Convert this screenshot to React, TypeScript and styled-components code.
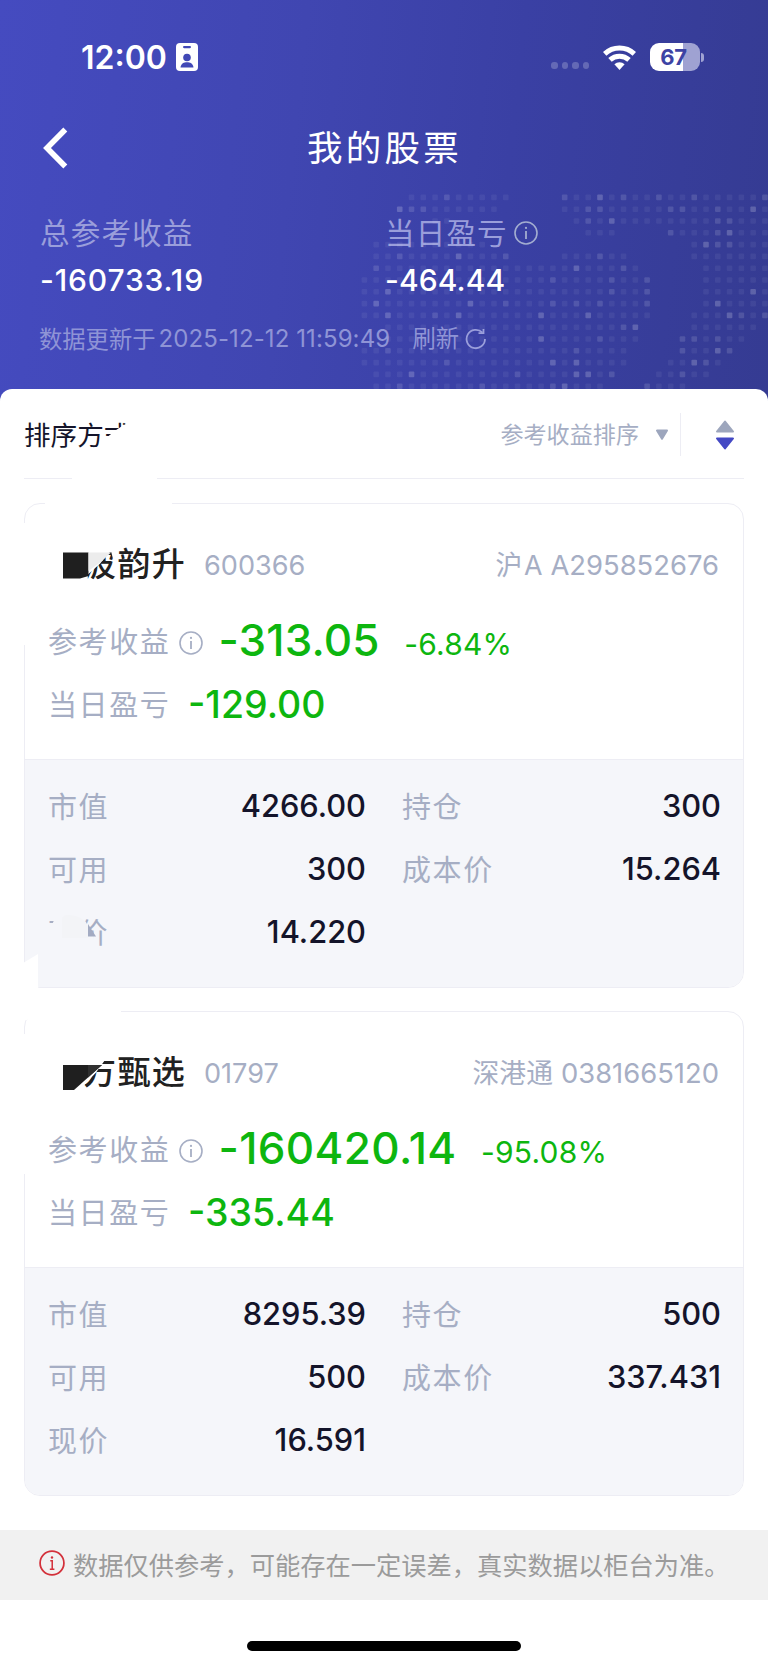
import React from 'react';
import styled, { createGlobalStyle } from 'styled-components';

const GlobalStyle = createGlobalStyle`
  * { box-sizing: border-box; }
  body {
    margin: 0;
    background: #fff;
    font-family: Inter, "Noto Sans CJK SC", sans-serif;
    line-height: 1;
    white-space: nowrap;
  }
  svg { display: block; flex: none; }
`;

const muted = '#a6aec4';
const line = '#ededf4';
const ink = '#14142a';
const green = '#0db60f';

const Page = styled.main`
  width: 768px;
  height: 1667px;
  display: flex;
  flex-direction: column;
  overflow: hidden;
  background: #fff;
`;

const Header = styled.header`
  position: relative;
  height: 403px;
  background: linear-gradient(96deg, #454bc0 0%, #4046b1 38%, #3a40a4 65%, #353b92 100%);
`;

const DotMap = styled.svg`
  position: absolute;
  left: 358px;
  top: 191px;
`;

const StatusBar = styled.div`
  height: 114px;
  padding: 0 64px 0 81px;
  display: flex;
  align-items: center;
`;

const Clock = styled.span`
  width: 95px;
  padding-top: 1px;
  font-size: 32px;
  font-weight: 600;
  letter-spacing: 0;
  color: #fff;
`;

const StatusRight = styled.div`
  margin-left: auto;
  display: flex;
  align-items: center;
`;

const Signal = styled.div`
  display: flex;
  gap: 4px;
  margin: 17px 14px 0 0;
`;

const SignalDot = styled.i`
  width: 6.5px;
  height: 6.5px;
  border-radius: 3px;
  background: rgba(255, 255, 255, 0.22);
`;

const Battery = styled.div`
  width: 50px;
  height: 28px;
  padding-right: 3px;
  margin-left: 14px;
  border-radius: 9px;
  display: flex;
  align-items: center;
  justify-content: center;
  background: linear-gradient(90deg, #fff 67%, #9fa2d2 67%);
  color: #3d43a4;
  font-size: 22px;
  font-weight: 700;
  letter-spacing: -0.3px;
`;

const BatteryCap = styled.i`
  width: 3px;
  height: 9px;
  margin-left: 1px;
  border-radius: 0 4px 4px 0;
  background: #9fa2d2;
`;

const NavBar = styled.nav`
  height: 68px;
  padding: 0 42px;
  display: grid;
  grid-template-columns: 60px 1fr 60px;
  align-items: center;
`;

const Title = styled.h1`
  margin: 0;
  padding: 2px 0 0 1px;
  text-align: center;
  font-size: 35.5px;
  font-weight: 400;
  letter-spacing: 3.2px;
  color: #fff;
`;

const Summary = styled.section`
  padding: 36px 40px 0;
  display: grid;
  grid-template-columns: 345px 1fr;
`;

const SummaryLabel = styled.div`
  height: 30px;
  display: flex;
  align-items: center;
  gap: 6px;
  font-size: 29.5px;
  letter-spacing: 1.2px;
  color: #9a9edb;
`;

const LabelText = styled.span`
  padding-top: 1px;
`;

const SummaryValue = styled.div<{ $spacing?: number }>`
  margin-top: 17px;
  font-size: 30px;
  font-weight: 500;
  letter-spacing: ${p => p.$spacing ?? 0}px;
  color: #fff;
`;

const Updated = styled.div`
  height: 24px;
  margin: 32px 0 0 39px;
  display: flex;
  align-items: center;
  font-size: 23.3px;
  color: #8f94d6;
`;

const UpdatedTime = styled.span`
  width: 248px;
  margin-left: 3px;
  font-size: 24px;
  letter-spacing: 0.1px;
`;

const Refresh = styled.span`
  margin-left: 6px;
  margin-right: 6px;
`;

const Sheet = styled.section`
  position: relative;
  margin-top: -14px;
  padding: 0 24px;
  height: 1141px;
  border-radius: 12px 12px 0 0;
  background: #fff;
`;

const SortBar = styled.div`
  position: relative;
  height: 90px;
  padding-top: 2px;
  display: flex;
  align-items: center;
  border-bottom: 1px solid ${line};
`;

const SortTitle = styled.span`
  padding-top: 1px;
  font-size: 26.6px;
  color: ${ink};
`;

const SortKey = styled.span`
  margin-left: auto;
  padding-top: 2px;
  font-size: 23.1px;
  color: ${muted};
`;

const Cut = styled.span<{ $shape: string }>`
  display: inline-block;
  clip-path: polygon(${p => p.$shape});
`;

const SortDivider = styled.i`
  width: 1px;
  height: 43px;
  margin: 0 34px 0 11px;
  background: ${line};
`;

const Cards = styled.div`
  padding-top: 24px;
  display: flex;
  flex-direction: column;
  gap: 23px;
`;

const Card = styled.article`
  position: relative;
  height: 485px;
  border: 1px solid ${line};
  border-radius: 16px;
  background: #fff;
`;

const Overlay = styled.svg`
  position: absolute;
  left: -1px;
  top: -1px;
  overflow: visible;
`;

const CardTop = styled.div`
  height: 256px;
  padding: 41px 24px 0 23px;
  border-bottom: 1px solid ${line};
`;

const NameRow = styled.div`
  height: 40px;
  padding-left: 35px;
  display: flex;
  align-items: center;
`;

const Name = styled.h2`
  margin: 0;
  width: 121px;
  padding-bottom: 1px;
  font-size: 33px;
  font-weight: 500;
  letter-spacing: 1.4px;
  color: #212121;
`;

const Code = styled.span`
  padding-top: 2px;
  font-size: 27.1px;
  color: ${muted};
`;

const Account = styled.span`
  margin-left: auto;
  padding-top: 2px;
  display: flex;
  align-items: baseline;
  gap: 8px;
  font-size: 27.4px;
  color: ${muted};
`;

const Market = styled.span`
  font-size: 26.8px;
  word-spacing: -6px;
`;

const GainRow = styled.div`
  height: 46px;
  margin-top: 32px;
  display: flex;
  align-items: center;
`;

const GainLabel = styled.span<{ $top: number }>`
  width: 124px;
  padding-top: ${p => p.$top}px;
  font-size: 29px;
  letter-spacing: 1.6px;
  color: ${muted};
`;

const IconSlot = styled.span`
  margin: 6px 0 0 7px;
  width: 39.5px;
`;

const Gain = styled.strong<{ $spacing: number }>`
  font-size: 44px;
  font-weight: 500;
  letter-spacing: ${p => p.$spacing}px;
  color: ${green};
`;

const Percent = styled.span`
  padding-top: 8px;
  margin-left: 24.5px;
  font-size: 30px;
  letter-spacing: 0.2px;
  color: ${green};
`;

const DayRow = styled.div`
  height: 40px;
  margin-top: 22px;
  display: flex;
  align-items: center;
  gap: 16px;
`;

const DayGain = styled.strong`
  font-size: 37.5px;
  font-weight: 500;
  color: ${green};
`;

const CardBody = styled.dl`
  margin: 0;
  height: 227px;
  padding: 15px 21px 0 23px;
  display: grid;
  grid-template-columns: 318px 319px;
  column-gap: 36px;
  grid-auto-rows: 63px;
  border-radius: 0 0 15px 15px;
  background: #f5f6fa;
`;

const Field = styled.div`
  display: flex;
  align-items: center;
  justify-content: space-between;
`;

const FieldLabel = styled.dt`
  padding-top: 1px;
  font-size: 29px;
  letter-spacing: 1.6px;
  color: ${muted};
`;

const FieldValue = styled.dd`
  margin: 0 0 1px;
  font-size: 30.8px;
  font-weight: 500;
  color: ${ink};
`;

const Notice = styled.footer`
  height: 70px;
  padding: 0 39px;
  display: flex;
  align-items: center;
  gap: 8px;
  background: #f1f1f1;
  font-size: 25.25px;
  color: #9b9b9b;
`;

const NoticeIcon = styled.span`
  margin-bottom: 5px;
`;

const NoticeText = styled.span`
  padding-top: 3px;
`;

const HomeIndicator = styled.div`
  width: 274px;
  height: 10px;
  margin: 41px auto 0;
  border-radius: 5px;
  background: #000;
`;

/* One string per row of the dotted map; digits are dot brightness. */
const dotRows = [
  '....111211111....211312112112111112',
  '...322111111.....112211111221121131',
  '......11..........12131111111122111',
  '...................111....211123111',
  '.1111111111.................1322111',
  '.112111131112....111211.....1111111',
  '.21111111111111111311121.....111111',
  '1111111111111111211112112....111111',
  '1131111111111111111112112....111131',
  '1311111113112111212121112....131111',
  '1131112131111113111311111...1113212',
  '..1111111111111111111123....111111.',
  '..1111111111111311112111...221211..',
  '11211111111111111121111....21132...',
  '11111112111111113131111...11321....',
  '.111311111111211113312...11211.....',
  '.11211111121111123111...2111.......',
];
const dotOpacity = [0, 0.06, 0.13, 0.2];

const WorldDots = () => (
  <DotMap width="410" height="198" aria-hidden>
    {dotRows.flatMap((row, r) =>
      [...row].map((c, i) =>
        c === '.' ? null : (
          <rect key={`${r}-${i}`} x={3.6 + i * 11.78} y={3.6 + r * 11.8} width="5.6" height="5.6" rx="1" fill="#fff" opacity={dotOpacity[+c]} />
        ),
      ),
    )}
  </DotMap>
);

const InfoIcon = ({ color, size = 24, serif = false }: { color: string; size?: number; serif?: boolean }) => (
  <svg width={size} height={size} viewBox="0 0 24 24" fill="none" stroke={color} strokeWidth="1.6">
    <circle cx="12" cy="12" r="11" />
    <circle cx="12" cy="6.9" r="1.1" fill={color} stroke="none" />
    <path d={serif ? 'M10.400 10H12.200V17.600M10 17.800H14.200' : 'M12 10v8'} strokeWidth={serif ? 1.4 : 1.8} />
  </svg>
);

type Holding = {
  name: React.ReactNode;
  code: string;
  market: string;
  account: string;
  gain: string;
  gainSpacing: number;
  percent: string;
  day: string;
  fields: [React.ReactNode, string][];
  overlay: React.ReactNode;
};

const holdings: Holding[] = [
  {
    name: <><Cut $shape="14% 100%, 14% 80%, 50% 47%, 72% 16%, 82% 12%, 87% 32%, 100% 36%, 100% 100%">波</Cut>韵升</>,
    code: '600366',
    market: '沪 A',
    account: 'A295852676',
    gain: '-313.05',
    gainSpacing: 0.15,
    percent: '-6.84%',
    day: '-129.00',
    fields: [
      ['市值', '4266.00'],
      ['持仓', '300'],
      ['可用', '300'],
      ['成本价', '15.264'],
      [
        <>
          <Cut $shape="0 0, 22% 0, 14% 20%, 0 28%">现</Cut>
          <Cut $shape="22% 0, 100% 0, 100% 100%, 50% 100%, 50% 55%, 30% 30%, 18% 25%">价</Cut>
        </>,
        '14.220',
      ],
    ],
    overlay: (
      <>
        <path d="M21-1H148V2H21ZM-1 20H2V142H-1Z" fill="#fff" />
        <path d="M-1 460L14 451V485H68V487H-1Z" fill="#fff" />
        <path d="M39 49.500H64.500V73L56 75.500H39Z" fill="#1f1f1f" />
        <path d="M64.500 49.500H87L78 58L64.500 68Z" fill="#ececec" />
        <path d="M38 416Q38 412 45 412Q60 413 64 423V435H38Z" fill="#f3f4f7" />
        <path d="M64 421L72 433.500H64Z" fill="#a3abc2" />
      </>
    ),
  },
  {
    name: <><Cut $shape="0 92%, 38% 50%, 68% 6%, 100% 6%, 100% 100%, 0 100%">方</Cut>甄选</>,
    code: '01797',
    market: '深港通',
    account: '0381665120',
    gain: '-160420.14',
    gainSpacing: 0.35,
    percent: '-95.08%',
    day: '-335.44',
    fields: [
      ['市值', '8295.39'],
      ['持仓', '500'],
      ['可用', '500'],
      ['成本价', '337.431'],
      ['现价', '16.591'],
    ],
    overlay: (
      <>
        <path d="M2-1H97V2H18Q8 3 3 9H-1V-1ZM-1 23H2V163H-1Z" fill="#fff" />
        <path d="M39 54H78L50 79H39Z" fill="#1f1f1f" />
        <path d="M64 54H78L64 66.500Z" fill="#303030" />
      </>
    ),
  },
];

const HoldingCard = ({ item }: { item: Holding }) => (
  <Card>
    <CardTop>
      <NameRow>
        <Name>{item.name}</Name>
        <Code>{item.code}</Code>
        <Account>
          <Market>{item.market}</Market>
          {item.account}
        </Account>
      </NameRow>
      <GainRow>
        <GainLabel $top={5}>参考收益</GainLabel>
        <IconSlot><InfoIcon color={muted} /></IconSlot>
        <Gain $spacing={item.gainSpacing}>{item.gain}</Gain>
        <Percent>{item.percent}</Percent>
      </GainRow>
      <DayRow>
        <GainLabel $top={1}>当日盈亏</GainLabel>
        <DayGain>{item.day}</DayGain>
      </DayRow>
    </CardTop>
    <CardBody>
      {item.fields.map(([label, value], i) => (
        <Field key={i}>
          <FieldLabel>{label}</FieldLabel>
          <FieldValue>{value}</FieldValue>
        </Field>
      ))}
    </CardBody>
    <Overlay width="720" height="485" aria-hidden>{item.overlay}</Overlay>
  </Card>
);

export default function App() {
  return (
    <Page>
      <GlobalStyle />
      <Header>
        <WorldDots />
        <StatusBar>
          <Clock>12:00</Clock>
          <svg width="22" height="28" viewBox="0 0 22 28">
            <rect width="22" height="28" rx="4" fill="#fff" />
            <rect x="7" y="3" width="8" height="2.200" rx="1.100" fill="#4148b6" />
            <circle cx="11" cy="14.500" r="3.800" fill="#4148b6" />
            <path d="M4.500 24.500C5 20.500 8 19.300 11 19.300S17 20.500 17.500 24.500Z" fill="#4148b6" />
          </svg>
          <StatusRight>
            <Signal>
              <SignalDot /><SignalDot /><SignalDot /><SignalDot />
            </Signal>
            <svg width="33" height="25" viewBox="0 0 33 25" fill="none" stroke="#fff" strokeWidth="5">
              <path d="M1.700 8.800A21.800 21.800 0 0 1 31.300 8.800" />
              <path d="M7 14.900A13.900 13.900 0 0 1 26 14.900" />
              <path d="M16.500 25L11.400 19.200A7.600 7.600 0 0 1 21.600 19.200Z" fill="#fff" stroke="none" />
            </svg>
            <Battery>67</Battery>
            <BatteryCap />
          </StatusRight>
        </StatusBar>
        <NavBar>
          <svg width="27" height="42" viewBox="0 0 27 42" fill="none" stroke="#fff" strokeWidth="5.600">
            <path d="M23.300 2.500L5 21L23.300 39.500" />
          </svg>
          <Title>我的股票</Title>
        </NavBar>
        <Summary>
          <div>
            <SummaryLabel><LabelText>总参考收益</LabelText></SummaryLabel>
            <SummaryValue $spacing={0.85}>-160733.19</SummaryValue>
          </div>
          <div>
            <SummaryLabel><LabelText>当日盈亏</LabelText><InfoIcon color="#a3add0" /></SummaryLabel>
            <SummaryValue $spacing={0.1}>-464.44</SummaryValue>
          </div>
        </Summary>
        <Updated>
          <LabelText>数据更新于</LabelText>
          <UpdatedTime>2025-12-12 11:59:49</UpdatedTime>
          <Refresh>刷新</Refresh>
          <svg width="22" height="22" viewBox="0 0 22 22" fill="none" stroke="#9a9edb" strokeWidth="1.800">
            <path d="M20 11A9.200 9.200 0 1 1 17.300 4.500" />
            <path d="M13.500 5.200H18.500V1" />
          </svg>
        </Updated>
      </Header>
      <Sheet>
        <SortBar>
          <SortTitle>
            排序方<Cut $shape="0 0, 100% 0, 75% 12%, 45% 32%, 10% 60%, 0 60%">式</Cut>
          </SortTitle>
          <SortKey>参考收益排序</SortKey>
          <svg width="14" height="12" viewBox="0 0 14 12" style={{ marginLeft: 16 }}>
            <path d="M2 1.500H12L7 9.800Z" fill="#9da6bd" stroke="#9da6bd" strokeWidth="2" strokeLinejoin="round" />
          </svg>
          <SortDivider />
          <svg width="20" height="30" viewBox="0 0 20 30" style={{ marginRight: 9 }}>
            <path d="M10 1.500L18 11.500H2Z" fill="#9da6bd" stroke="#9da6bd" strokeWidth="2" strokeLinejoin="round" />
            <path d="M10 28.500L18 18.500H2Z" fill="#4449c4" stroke="#4449c4" strokeWidth="2" strokeLinejoin="round" />
          </svg>
          <Overlay width="720" height="90" aria-hidden>
            <path d="M49 88H134V93H49Z" fill="#fff" />
          </Overlay>
        </SortBar>
        <Cards>
          {holdings.map(item => <HoldingCard key={item.code} item={item} />)}
        </Cards>
      </Sheet>
      <Notice>
        <NoticeIcon><InfoIcon color="#d3303a" size={26} serif /></NoticeIcon>
        <NoticeText>数据仅供参考，可能存在一定误差，真实数据以柜台为准。</NoticeText>
      </Notice>
      <HomeIndicator />
    </Page>
  );
}
